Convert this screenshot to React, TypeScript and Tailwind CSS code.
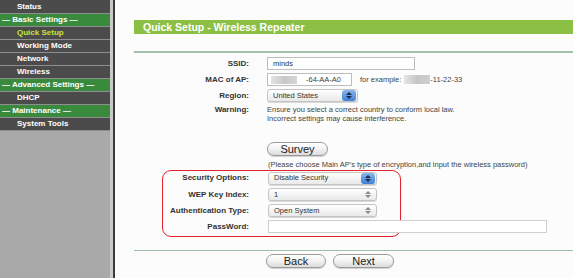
import React from "react";

const font = { fontFamily: '"Liberation Sans", Arial, sans-serif' };

function SideItem({ label, kind }: { label: string; kind: "cat" | "item" | "active" }) {
  if (kind === "cat") {
    return (
      <div className="h-[12px] bg-[#3a8a3e] text-white font-bold text-[8px] leading-[12px] pl-[2px] mb-[1px] whitespace-nowrap">
        {label}
      </div>
    );
  }
  return (
    <div
      className={`h-[12px] bg-[#4b4b4b] font-bold text-[8px] leading-[12px] pl-[17px] mb-[1px] whitespace-nowrap ${
        kind === "active" ? "text-[#c9e43a]" : "text-white"
      }`}
    >
      {label}
    </div>
  );
}

function Arrows({ blue }: { blue?: boolean }) {
  return (
    <div
      className={`w-[14px] h-[11px] mr-[1px] rounded-[3px] flex flex-col items-center justify-center gap-[1px] ${
        blue ? "bg-gradient-to-b from-[#8ab6ea] to-[#3f7fd6]" : ""
      }`}
    >
      <svg width="6" height="3" viewBox="0 0 6 3">
        <path d="M0 3 L3 0 L6 3 Z" fill={blue ? "#1c2d4a" : "#8a8a8a"} />
      </svg>
      <svg width="6" height="3" viewBox="0 0 6 3">
        <path d="M0 0 L3 3 L6 0 Z" fill={blue ? "#1c2d4a" : "#8a8a8a"} />
      </svg>
    </div>
  );
}

function Select({ value, width, blue }: { value: string; width: string; blue?: boolean }) {
  return (
    <div
      className={`${width} h-[13px] rounded-[3px] border border-[#c4c4c4] bg-gradient-to-b from-white to-[#e9e9e9] flex items-center justify-between shadow-[0_1px_0_#d8d8d8]`}
    >
      <span className="pl-[5px] text-[7.5px] text-[#333] leading-none">{value}</span>
      <Arrows blue={blue} />
    </div>
  );
}

function Label({ children }: { children: React.ReactNode }) {
  return (
    <div className="w-[116px] text-right pr-[1px] font-bold text-[8px] text-[#333] whitespace-nowrap leading-none">
      {children}
    </div>
  );
}

function PillButton({ label, width }: { label: string; width: string }) {
  return (
    <div
      className={`${width} h-[14px] rounded-full border border-[#9a9a9a] bg-gradient-to-b from-white via-[#f2f2f2] to-[#dcdcdc] flex items-center justify-center text-[11px] text-[#222] leading-none shadow-[0_1px_1px_#d0d0d0]`}
    >
      {label}
    </div>
  );
}

export default function App() {
  return (
    <div className="w-[573px] h-[278px] flex bg-[#fbfcfb] overflow-hidden" style={font}>
      {/* Sidebar */}
      <div className="w-[110px] h-full bg-[#a9a9a9] flex flex-col">
        <div className="bg-[#8e8e8e]">
          <div className="h-[13px] bg-[#4b4b4b] text-white font-bold text-[8px] leading-[13px] pl-[17px] mb-[1px]">Status</div>
          <SideItem label="— Basic Settings —" kind="cat" />
          <SideItem label="Quick Setup" kind="active" />
          <SideItem label="Working Mode" kind="item" />
          <SideItem label="Network" kind="item" />
          <SideItem label="Wireless" kind="item" />
          <SideItem label="— Advanced Settings —" kind="cat" />
          <SideItem label="DHCP" kind="item" />
          <SideItem label="— Maintenance —" kind="cat" />
          <SideItem label="System Tools" kind="item" />
        </div>
      </div>
      <div className="w-[3px] h-full bg-[#c9c9c9]" />
      <div className="w-[2px] h-full bg-[#3a3a3a]" />

      {/* Main */}
      <div className="flex-1 pl-[19px] pt-[20px] flex flex-col">
        <div className="h-[14px] bg-[#8bc045] text-white font-bold text-[10.5px] leading-[14px] pl-[9px]">
          Quick Setup - Wireless Repeater
        </div>
        <div className="mt-[17px] h-[2px] bg-[#a3c2ad]" />

        <div className="flex items-center h-[13px] mt-[4px] gap-[17px]">
          <Label>SSID:</Label>
          <div className="w-[148px] h-[13px] border border-[#bdbdbd] bg-white text-[7.5px] pl-[5px] flex items-center text-[#333]">minds</div>
        </div>

        <div className="flex items-center h-[13px] mt-[3px] gap-[17px]">
          <Label>MAC of AP:</Label>
          <div className="w-[85px] h-[13px] border border-[#bdbdbd] bg-white text-[7.5px] flex items-center text-[#444] whitespace-nowrap">
            <div className="ml-[3px] w-[26px] h-[8px] bg-gradient-to-r from-[#e4e4e4] via-[#c8c8c8] to-[#d6d6d6]" />
            <span className="ml-[9px]">-64-AA-A0</span>
          </div>
          <div className="ml-[-9px] text-[7.5px] text-[#444] flex items-center whitespace-nowrap">
            for example:
            <div className="ml-[3px] w-[26px] h-[9px] bg-gradient-to-r from-[#e6e6e6] via-[#c6c6c6] to-[#cfcfcf]" />
            <span>-11-22-33</span>
          </div>
        </div>

        <div className="flex items-center h-[13px] mt-[3px] gap-[17px]">
          <Label>Region:</Label>
          <Select value="United States" width="w-[91px]" blue />
        </div>

        <div className="flex mt-[3px] gap-[17px]">
          <div className="pt-[1px]"><Label>Warning:</Label></div>
          <div className="text-[7.5px] text-[#444] leading-[9px]">
            Ensure you select a correct country to conform local law.
            <br />
            Incorrect settings may cause interference.
          </div>
        </div>

        <div className="ml-[133px] mt-[19px]">
          <PillButton label="Survey" width="w-[61px]" />
        </div>

        <div className="ml-[134px] mt-[4px] text-[7.5px] text-[#444] leading-[9px] whitespace-nowrap">
          (Please choose Main AP's type of encryption,and input the wireless password)
        </div>

        <div className="relative mt-[1px] h-[67px]">
          <div className="absolute left-[28px] top-0 w-[239px] h-[67px] border border-[#e2222a] rounded-[9px]" />
          <div className="relative flex flex-col pt-[2px]">
            <div className="flex items-center h-[12px] gap-[18px]">
              <Label>Security Options:</Label>
              <Select value="Disable Security" width="w-[109px]" blue />
            </div>
            <div className="flex items-center h-[13px] mt-[4px] gap-[18px]">
              <Label>WEP Key Index:</Label>
              <Select value="1" width="w-[109px]" />
            </div>
            <div className="flex items-center h-[13px] mt-[3px] gap-[18px]">
              <Label>Authentication Type:</Label>
              <Select value="Open System" width="w-[109px]" />
            </div>
            <div className="flex items-center h-[13px] mt-[3px] gap-[18px]">
              <Label>PassWord:</Label>
              <div className="w-[279px] h-[13px] border border-[#cfcfcf] bg-white" />
            </div>
          </div>
        </div>

        <div className="mt-[13px] h-[1px] bg-[#9cbfa5]" />

        <div className="flex ml-[132px] mt-[3px] gap-[7px]">
          <PillButton label="Back" width="w-[60px]" />
          <PillButton label="Next" width="w-[61px]" />
        </div>
      </div>
    </div>
  );
}
